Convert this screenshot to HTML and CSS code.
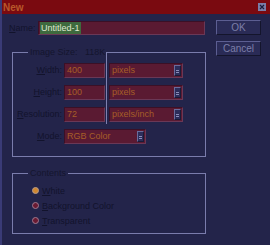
FILE: index.html
```html
<!DOCTYPE html>
<html>
<head>
<meta charset="utf-8">
<link rel="stylesheet" href="styles.css">
</head>
<body>
<div class="window">
  <div class="titlebar">
    <span class="title">New</span>
    <span class="close"><svg width="8" height="8" viewBox="0 0 8 8"><path d="M2 2L6 6M6 2L2 6" stroke="#1c1d3a" stroke-width="1.2"/></svg></span>
  </div>
  <div class="content">
    <div class="main">
      <div class="name-row">
        <span class="label"><u>N</u>ame:</span>
        <div class="field name-field"><span class="sel">Untitled-1</span></div>
      </div>
      <fieldset class="group size-group">
        <legend>Image Size:&nbsp;&nbsp;&nbsp;118K</legend>
        <div class="grid">
          <span class="label r1"><u>W</u>idth:</span>
          <div class="field num r1">400</div>
          <div class="divider"></div>
          <div class="field select r1"><span>pixels</span><span class="arrow"></span></div>
          <span class="label r2"><u>H</u>eight:</span>
          <div class="field num r2">100</div>
          <div class="field select r2"><span>pixels</span><span class="arrow"></span></div>
          <span class="label r3"><u>R</u>esolution:</span>
          <div class="field num r3">72</div>
          <div class="field select r3"><span>pixels/inch</span><span class="arrow"></span></div>
          <span class="label r4"><u>M</u>ode:</span>
          <div class="field select mode r4"><span>RGB Color</span><span class="arrow"></span></div>
        </div>
      </fieldset>
      <fieldset class="group contents-group">
        <legend>Contents</legend>
        <div class="radio-row"><span class="radio on"></span><span><u>W</u>hite</span></div>
        <div class="radio-row"><span class="radio"></span><span><u>B</u>ackground Color</span></div>
        <div class="radio-row"><span class="radio"></span><span><u>T</u>ransparent</span></div>
      </fieldset>
    </div>
    <div class="buttons">
      <div class="btn">OK</div>
      <div class="btn">Cancel</div>
    </div>
  </div>
</div>
</body>
</html>
```
FILE: styles.css
```css
html, body {
  margin: 0;
  padding: 0;
  background: #23244a;
}
.window {
  width: 270px;
  height: 245px;
  box-sizing: border-box;
  background: #23244a;
  border-left: 2px solid #3a3b76;
  font-family: "Liberation Sans", Arial, sans-serif;
  font-size: 9px;
  color: #12132c;
  overflow: hidden;
}
.titlebar {
  height: 14px;
  margin-left: -2px;
  background: #7a0a10;
  display: flex;
  justify-content: space-between;
  align-items: center;
  padding: 0 4px 0 3px;
}
.title {
  font-weight: bold;
  font-size: 10px;
  color: #b8582a;
}
.close {
  width: 8px;
  height: 8px;
  background: #7a7ea8;
  display: flex;
}
.content {
  display: flex;
  padding: 7px 0 0 7px;
}
.main {
  width: 196px;
}
.name-row {
  display: flex;
  align-items: center;
  height: 14px;
}
.name-row .label {
  width: 29px;
}
.field {
  box-sizing: border-box;
  background: #5a1a32;
  border: 1px solid #3b1026;
  border-right-color: #6a3856;
  border-bottom-color: #6a3856;
  color: #a65e28;
  height: 15px;
  line-height: 13px;
  padding-left: 2px;
}
.name-field {
  width: 167px;
  height: 14px;
  line-height: 12px;
  padding-left: 1px;
}
.sel {
  background: #3e6a3e;
  color: #dfe8cf;
  padding: 0 1px;
  display: inline-block;
  line-height: 12px;
}
u {
  text-decoration: underline;
  text-underline-offset: 1px;
}
.group {
  margin: 0;
  border: 1px solid #7a7cac;
  min-width: 0;
  box-sizing: border-box;
  width: 194px;
}
.group legend {
  padding: 0 2px;
  margin-left: 15px;
  line-height: 10px;
  color: #14152e;
}
.size-group {
  margin: 12px 0 0 3px;
  padding: 6px 0 12px 0;
}
.grid {
  display: grid;
  grid-template-columns: 51px 41px 3px 75px;
  column-gap: 0;
  row-gap: 7px;
  padding-left: 0;
}
.grid .label {
  text-align: right;
  padding-right: 2px;
  line-height: 15px;
  grid-column: 1;
}
.r1 { grid-row: 1; }
.r2 { grid-row: 2; }
.r3 { grid-row: 3; }
.r4 { grid-row: 4; }
.num { grid-column: 2; }
.select {
  grid-column: 4;
  display: flex;
  justify-content: space-between;
  padding-right: 1px;
  margin-left: 1px;
}
.select.mode {
  grid-column: 2 / 5;
  width: 82px;
  margin-left: 0;
}
.arrow {
  width: 7px;
  height: 11px;
  margin-top: 1px;
  box-sizing: border-box;
  background: #2c2d5a;
  border: 1px solid #6a6c9c;
  border-right-color: #1a1b38;
  border-bottom-color: #1a1b38;
  display: flex;
  justify-content: center;
  align-items: center;
}
.arrow::after {
  content: "";
  width: 3px;
  height: 1px;
  background: #8a8cb8;
  box-shadow: 0 2px 0 #8a8cb8;
}
.divider {
  grid-column: 3;
  grid-row: 1 / 4;
  width: 1px;
  margin-left: 1px;
  margin-top: -11px;
  margin-bottom: -2px;
  background: #7e80b0;
}
.contents-group {
  margin: 11px 0 0 3px;
  padding: 5px 0 5px 0;
}
.radio-row {
  display: flex;
  align-items: center;
  height: 15px;
  padding-left: 19px;
  gap: 3px;
}
.radio {
  width: 7px;
  height: 7px;
  box-sizing: border-box;
  border-radius: 50%;
  background: #6a1a32;
  border: 1px solid #a07a90;
}
.radio.on {
  background: #d08830;
  border-color: #b89a88;
}
.buttons {
  display: flex;
  flex-direction: column;
  gap: 6px;
  margin-left: 11px;
  margin-top: -1px;
}
.btn {
  width: 45px;
  height: 15px;
  box-sizing: border-box;
  background: #2a2b56;
  border: 1px solid #5c5e92;
  border-right-color: #14152c;
  border-bottom-color: #14152c;
  color: #7c7ea8;
  text-align: center;
  line-height: 13px;
  font-size: 10px;
}
```
